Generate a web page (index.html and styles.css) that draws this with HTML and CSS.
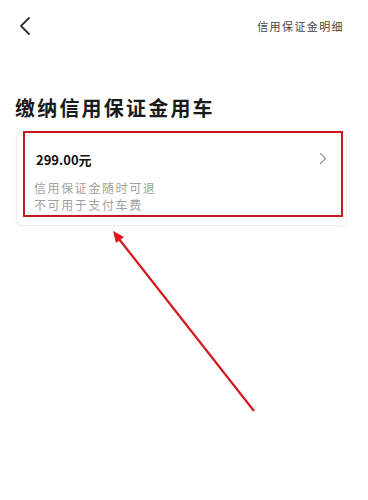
FILE: index.html
```html
<!DOCTYPE html>
<html lang="zh-CN">
<head>
<meta charset="utf-8">
<link rel="stylesheet" href="styles.css">
</head>
<body>
<div class="page">
  <header class="topbar">
    <svg class="back" width="12" height="20" viewBox="0 0 12 20"><path d="M10 2 L2 10 L10 18" fill="none" stroke="#333" stroke-width="1.8" stroke-linecap="round" stroke-linejoin="round"/></svg>
    <span class="detail-link">信用保证金明细</span>
  </header>
  <h1 class="title">缴纳信用保证金用车</h1>
  <div class="card">
    <div class="card-row">
      <span class="price">299.00元</span>
      <svg class="chev" width="8" height="13" viewBox="0 0 8 13"><path d="M1.5 1.5 L6.5 6.5 L1.5 11.5" fill="none" stroke="#999" stroke-width="1.3" stroke-linecap="round" stroke-linejoin="round"/></svg>
    </div>
    <p class="note">信用保证金随时可退<br>不可用于支付车费</p>
    <div class="highlight"></div>
  </div>
  <svg class="arrow" width="368" height="500" viewBox="0 0 368 500">
    <line x1="254" y1="411" x2="119" y2="239" stroke="#d01c1f" stroke-width="2.2"/>
    <polygon points="113,231 124,237 116,243" fill="#e01515"/>
  </svg>
</div>
</body>
</html>
```
FILE: styles.css
```css
* { box-sizing: border-box; }
html, body { margin: 0; padding: 0; background: #fff; }
body { font-family: "Noto Sans CJK SC", "Noto Sans", sans-serif; color: #222; }
.page { position: relative; width: 368px; height: 500px; overflow: hidden; }
.topbar {
  height: 52px;
  display: flex;
  align-items: center;
  justify-content: space-between;
  padding: 0 24px 0 19px;
}
.back { display: block; }
.detail-link { font-size: 11px; letter-spacing: 1.4px; color: #444; }
.title {
  margin: 42px 0 9px 15px;
  font-size: 20px;
  line-height: 28px;
  letter-spacing: 2.2px;
  font-weight: 700;
  color: #1a1a1a;
}
.card {
  position: relative;
  margin: 0 21px 0 16px;
  border: 1px solid #eeeeee;
  border-radius: 6px;
  box-shadow: 0 1px 3px rgba(0,0,0,0.04);
  padding: 19px 19px 12px 19px;
}
.card-row { display: flex; align-items: center; justify-content: space-between; height: 18px; }
.price { font-size: 13px; font-weight: 700; line-height: 18px; color: #111; }
.chev { display: block; margin-top: -3px; }
.note {
  margin: 10px 0 0 -2px;
  font-size: 12px;
  line-height: 17px;
  letter-spacing: 1.6px;
  color: #a0a0a0;
}
.highlight {
  position: absolute;
  left: 6px;
  top: -1px;
  width: 320px;
  height: 86px;
  border: 2px solid #c8161d;
}
.arrow { position: absolute; left: 0; top: 0; pointer-events: none; }
```
